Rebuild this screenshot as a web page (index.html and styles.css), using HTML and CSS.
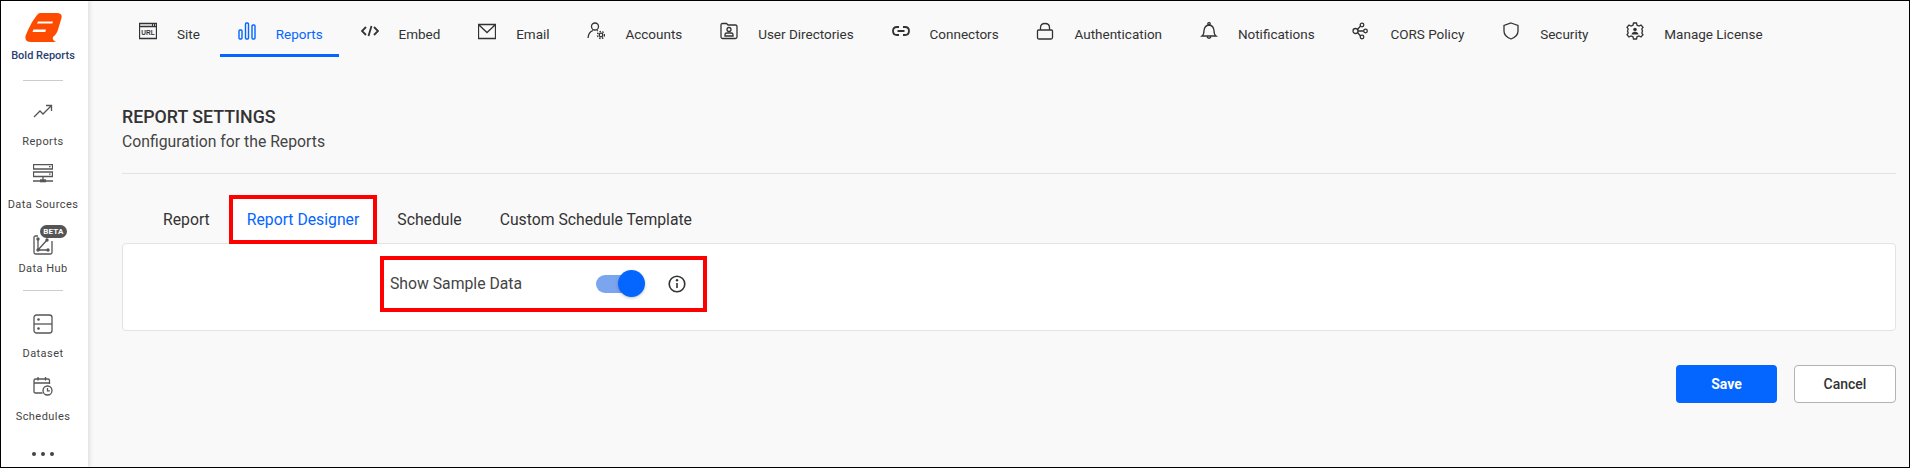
FILE: index.html
```html
<!DOCTYPE html>
<html lang="en">
<head>
<meta charset="utf-8">
<title>Report Settings</title>
<link rel="stylesheet" href="styles.css">
</head>
<body>
<div class="app">
  <aside class="sidebar">
    <div class="brand">
      <svg class="logo" width="37" height="29" viewBox="0 0 37 29"><path fill="#ff4b00" fill-rule="evenodd" d="M15 0H32Q37.500 0 36.500 5L33.500 15Q32 21 28.500 23.500Q27 25 28.500 27Q29.500 28.500 31 29H6Q-0.500 29 0.500 23L3 17Q7 8 12 2Q13.500 0 15 0ZM13 8.500H28L27.300 10.500H12ZM8.500 16.500H21L20.300 19H7.500Z"/></svg>
      <div class="brand-name">Bold Reports</div>
    </div>
    <hr class="side-rule">
    <a class="side-item side-first">
      <svg class="side-icon" viewBox="0 0 20 20"><path d="M1 16L7 10L10 13L18 5M13 4.500H18.500V10"/></svg>
      <span>Reports</span>
    </a>
    <a class="side-item">
      <svg class="side-icon" viewBox="0 0 20 20"><path d="M0.500 0.500H19.500V5H0.500ZM0.500 8H19.500V12.500H0.500ZM16 2.700H17.500M16 10.200H17.500M10 12.500V16.500M0 17H7M13 17H20"/><rect class="fill" x="7" y="15.300" width="6" height="3"/></svg>
      <span>Data Sources</span>
    </a>
    <a class="side-item side-hub">
      <span class="beta">BETA</span>
      <svg class="side-icon" viewBox="0 0 20 20"><path d="M5 1H2.500Q1 1 1 2.500V17.500Q1 19 2.500 19H17.500Q19 19 19 17.500V6M5 4V15H16M5 15L14 5"/><circle class="fill" cx="5" cy="4" r="1.700"/><circle class="fill" cx="5" cy="15" r="1.700"/><circle class="fill" cx="14" cy="5" r="1.700"/><circle class="fill" cx="15" cy="15" r="1.700"/></svg>
      <span>Data Hub</span>
    </a>
    <hr class="side-rule side-rule-2">
    <a class="side-item side-dataset">
      <svg class="side-icon" viewBox="0 0 20 20"><rect x="1" y="1" width="18" height="18" rx="2.500"/><path d="M1 10H19"/><circle class="fill" cx="5.500" cy="5.500" r="1.300"/><circle class="fill" cx="5.500" cy="14.500" r="1.300"/></svg>
      <span>Dataset</span>
    </a>
    <a class="side-item">
      <svg class="side-icon" viewBox="0 0 20 20"><path d="M9.500 17H2.500Q1 17 1 15.500V4.500Q1 3 2.500 3H15Q16.500 3 16.500 4.500V8M1 7H16.500M5 1V4.500M12.500 1V4.500"/><circle cx="14.500" cy="14.500" r="4.500"/><path d="M14.500 12V14.800H16.800"/></svg>
      <span>Schedules</span>
    </a>
    <div class="more"><i></i><i></i><i></i></div>
  </aside>

  <main class="main">
    <nav class="topnav">
      <a class="top-item">
        <svg class="top-icon" viewBox="0 0 18 18"><path d="M0.500 1.500H17.500V16.500H0.500ZM0.500 4.500H17.500M13 3H14M15 3H16"/><text x="9" y="13" class="url">URL</text></svg>
        <span>Site</span>
      </a>
      <a class="top-item active">
        <svg class="top-icon" viewBox="0 0 18 18"><rect x="1" y="8" width="3" height="9" rx="1"/><rect x="7.500" y="1" width="3" height="16" rx="1"/><rect x="14" y="3" width="3" height="14" rx="1"/></svg>
        <span>Reports</span>
      </a>
      <a class="top-item">
        <svg class="top-icon" viewBox="0 0 18 18"><path class="thick" d="M5 5L1 9L5 13M13 5L17 9L13 13M10.500 4L7.500 14"/></svg>
        <span>Embed</span>
      </a>
      <a class="top-item">
        <svg class="top-icon" viewBox="0 0 18 18"><path d="M0.500 2.500H17.500V16.500H0.500ZM1 3L9 10.500L17 3"/></svg>
        <span>Email</span>
      </a>
      <a class="top-item">
        <svg class="top-icon" viewBox="0 0 18 18"><circle cx="8" cy="4.500" r="3.500"/><path d="M1 16Q1.500 10 6 8.500M10 8.500L11 9"/><circle cx="14" cy="13" r="1.800"/><circle class="dash" cx="14" cy="13" r="3.500"/></svg>
        <span>Accounts</span>
      </a>
      <a class="top-item">
        <svg class="top-icon" viewBox="0 0 18 18"><path d="M1 4V15Q1 16.500 2.500 16.500H15.500Q17 16.500 17 15V4.500Q17 3 15.500 3H8L6.500 1.500H2.500Q1 1.500 1 3V4"/><circle cx="9" cy="7.500" r="2"/><path d="M5 14V12.500Q5 11 7 11H11Q13 11 13 12.500V14Z"/></svg>
        <span>User Directories</span>
      </a>
      <a class="top-item">
        <svg class="top-icon" viewBox="0 0 18 18"><path class="thick" d="M7 5H5Q1 5 1 9Q1 13 5 13H7M11 5H13Q17 5 17 9Q17 13 13 13H11M5.500 9H12.500"/></svg>
        <span>Connectors</span>
      </a>
      <a class="top-item">
        <svg class="top-icon" viewBox="0 0 18 18"><path d="M2.500 8H15.500Q16.500 8 16.500 9V15.500Q16.500 17 15 17H3Q1.500 17 1.500 15.500V9Q1.500 8 2.500 8ZM4.500 8V5.500Q4.500 1.500 9 1.500Q13.500 1.500 13.500 5.500V8"/></svg>
        <span>Authentication</span>
      </a>
      <a class="top-item">
        <svg class="top-icon" viewBox="0 0 18 18"><path d="M2 14Q4 12.500 4 8.500Q4.500 3.500 9 3Q13.500 3.500 14 8.500Q14 12.500 16 14ZM1.500 14H16.500M7 15Q9 17.500 11 15"/><circle cx="9" cy="1.800" r="1.200"/></svg>
        <span>Notifications</span>
      </a>
      <a class="top-item">
        <svg class="top-icon" viewBox="0 0 18 18"><circle cx="3.500" cy="9" r="2.500"/><circle cx="10" cy="3" r="1.800"/><circle cx="13.500" cy="9" r="1.800"/><circle cx="10" cy="15" r="1.800"/><path d="M5.500 7.500L8.500 4M6 9H11.700M5.500 10.500L8.500 14"/></svg>
        <span>CORS Policy</span>
      </a>
      <a class="top-item">
        <svg class="top-icon" viewBox="0 0 18 18"><path d="M9 1L16 3.500V9Q16 14.500 9 17Q2 14.500 2 9V3.500Z"/></svg>
        <span>Security</span>
      </a>
      <a class="top-item">
        <svg class="top-icon" viewBox="0 0 18 18"><path d="M7.500 1H10.500L11 3.200L13 4L15 3L17 5.200L15.800 7L16.500 9L15.800 11L17 12.800L15 15L13 14L11 14.800L10.500 17H7.500L7 14.800L5 14L3 15L1 12.800L2.200 11L1.500 9L2.200 7L1 5.200L3 3L5 4L7 3.200Z"/><circle class="fill" cx="9" cy="7.500" r="1.800"/><path class="fill" d="M5.500 12.500Q6 9.800 9 9.800Q12 9.800 12.500 12.500Z"/></svg>
        <span>Manage License</span>
      </a>
    </nav>

    <section class="content">
      <h1 class="title">REPORT SETTINGS</h1>
      <p class="subtitle">Configuration for the Reports</p>
      <hr class="rule">
      <div class="tabs">
        <a class="tab">Report</a>
        <a class="tab tab-current">Report Designer</a>
        <a class="tab">Schedule</a>
        <a class="tab">Custom Schedule Template</a>
      </div>
      <div class="panel">
        <div class="option">
          <span class="option-label">Show Sample Data</span>
          <span class="switch"><span class="knob"></span></span>
          <svg class="info" viewBox="0 0 18 18"><circle cx="9" cy="9" r="7.800"/><path d="M9 8V13"/><circle class="dot" cx="9" cy="5.300" r="1.200"/></svg>
        </div>
      </div>
      <div class="actions">
        <button class="btn btn-save">Save</button>
        <button class="btn btn-cancel">Cancel</button>
      </div>
    </section>
  </main>
</div>
</body>
</html>
```
FILE: styles.css
```css
* { box-sizing: border-box; }
html, body { margin: 0; height: 100%; overflow: hidden; }
body { font-family: Roboto, "Liberation Sans", sans-serif; color: #333; }
a { color: inherit; text-decoration: none; }

.app {
  display: flex;
  width: 1910px;
  height: 468px;
  border: 1px solid #000;
  background: #f9f9f9;
  overflow: hidden;
}

/* Sidebar */
.sidebar {
  flex: none;
  width: 87px;
  padding-right: 3px;
  background: #fff;
  box-shadow: 2px 0 4px rgba(0, 0, 0, .1);
  display: flex;
  flex-direction: column;
  align-items: center;
  position: relative;
  z-index: 1;
}
.brand { display: flex; flex-direction: column; align-items: center; padding-top: 12px; }
.logo { display: block; }
.brand-name { font-size: 11px; line-height: 13px; color: #2c4170; margin-top: 7px; white-space: nowrap; font-weight: 500; }
.side-rule { width: 40px; height: 1px; border: 0; margin: 18px 0 0; background: #ccc; flex: none; }
.side-rule-2 { margin-top: 15px; }
.side-item {
  position: relative;
  display: flex;
  flex-direction: column;
  align-items: center;
  height: 63px;
  flex: none;
  font-size: 11px;
  line-height: 13px;
  letter-spacing: .45px;
  color: #444;
  white-space: nowrap;
}
.side-first { margin-top: 20px; }
.side-icon {
  width: 20px;
  height: 20px;
  fill: none;
  stroke: #555;
  stroke-width: 1.300;
  margin-bottom: 14px;
}
.side-icon .fill { fill: #555; stroke: none; }
.side-hub { padding-top: 8px; height: 48px; }
.side-hub .side-icon { margin-bottom: 7px; }
.side-dataset { margin-top: 23px; height: 62px; }
.side-dataset .side-icon { margin-bottom: 13px; }
.beta {
  position: absolute;
  top: -2px;
  left: 50%;
  margin-left: -3px;
  width: 27px;
  height: 13px;
  border-radius: 7px;
  background: #555;
  color: #fff;
  font-size: 8px;
  line-height: 13px;
  font-weight: 700;
  text-align: center;
  letter-spacing: .2px;
}
.more { display: flex; gap: 5px; padding-top: 13px; }
.more i { width: 4px; height: 4px; border-radius: 50%; background: #444; }

/* Main area */
.main { flex: 1; min-width: 0; display: flex; flex-direction: column; }
.topnav { display: flex; gap: 4px; padding: 0 0 0 33px; height: 56px; flex: none; }
.top-item {
  display: flex;
  align-items: flex-start;
  height: 56px;
  padding: 0 15.800px 0 18px;
  font-size: 13.500px;
  line-height: 16px;
  color: #333;
  white-space: nowrap;
}
.top-item span { padding-top: 25px; }
.top-icon {
  width: 18px;
  height: 18px;
  margin: 21px 20px 0 0;
  fill: none;
  stroke: #333;
  stroke-width: 1.300;
  flex: none;
}
.top-icon .thick { stroke-width: 1.800; }
.top-icon .fill { fill: #333; stroke: none; }
.top-icon .dash { stroke-dasharray: 1.500 1.400; stroke-width: 1.400; }
.top-icon .url { font: 700 6.500px "Liberation Sans", sans-serif; fill: #333; stroke: none; text-anchor: middle; }
.active { color: #0565ff; border-bottom: 3px solid #0565ff; }
.active .top-icon { stroke: #0565ff; stroke-width: 1.400; }

.content { flex: 1; padding: 49px 13px 0 34px; }
.title { margin: 0; font-size: 17.800px; line-height: 21px; font-weight: 500; color: #333; }
.subtitle { margin: 7px 0 0; font-size: 15.750px; line-height: 16px; color: #444; }
.rule { height: 1px; border: 0; margin: 23px 0 0; background: #e3e3e3; }
.tabs { display: flex; margin-top: 21px; padding-left: 22px; height: 49px; position: relative; z-index: 1; }
.tab { display: flex; align-items: center; font-size: 15.750px; padding: 0 19px; color: #333; white-space: nowrap; }
.tab-current { color: #0565ff; background: #fff; border: 4px solid #f00; padding: 0 14px; margin: 0 1px 0 0; }
.panel {
  height: 88px;
  margin-top: -1px;
  background: #fff;
  border: 1px solid #e3e3e3;
  border-radius: 4px;
  padding: 12px 0 0 257px;
}
.option {
  display: flex;
  align-items: center;
  width: 327px;
  height: 56px;
  border: 4px solid #f00;
  padding-left: 6px;
  font-size: 15.750px;
}
.option-label { width: 206px; color: #444; padding-bottom: 2px; }
.switch { position: relative; width: 44px; height: 18px; border-radius: 9px; background: #7ba5ee; flex: none; margin-right: 28px; }
.knob {
  position: absolute;
  left: 22px;
  top: -5px;
  width: 27px;
  height: 27px;
  border-radius: 50%;
  background: #0565ff;
  box-shadow: 0 1px 3px rgba(0, 0, 0, .25);
}
.info { width: 18px; height: 18px; fill: none; stroke: #333; stroke-width: 1.600; }
.info .dot { fill: #333; stroke: none; }
.actions { display: flex; justify-content: flex-end; gap: 17px; margin-top: 34px; }
.btn { width: 102px; height: 38px; border-radius: 4px; font: 14px Roboto, sans-serif; padding: 0; }
.btn-save { width: 101px; background: #0565ff; border: 0; color: #fff; font-weight: 700; }
.btn-cancel { background: #fff; border: 1px solid #b3b3b3; color: #333; font-weight: 500; }
```
